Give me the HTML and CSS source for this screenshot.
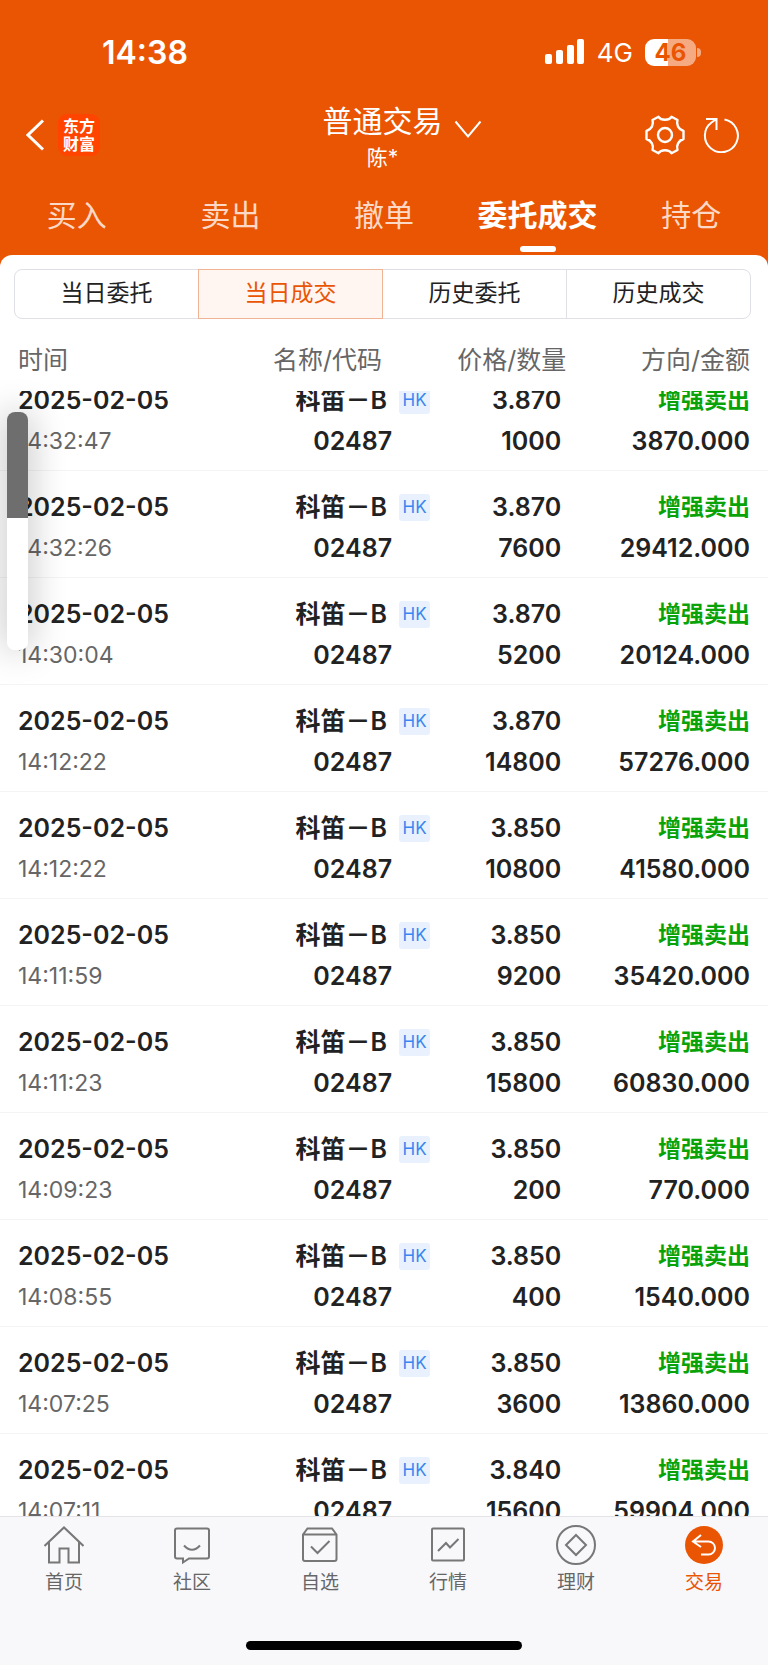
FILE: index.html
```
<!DOCTYPE html>
<html lang="zh-CN">
<head>
  <meta charset="utf-8">
  <meta name="viewport" content="width=device-width">
  <title>普通交易</title>
  <link rel="stylesheet" href="styles.css">
</head>
<body>
  <header class="top">
    <div class="status">
      <span class="clock">14:38</span>
      <div class="status-right">
        <svg width="40" height="26" viewBox="0 0 40 26" fill="#fff">
          <rect x="0" y="15" width="7" height="10" rx="2"/>
          <rect x="11" y="11" width="7" height="14" rx="2"/>
          <rect x="22" y="6" width="7" height="19" rx="2"/>
          <rect x="32" y="0" width="7" height="25" rx="2"/>
        </svg>
        <span class="network">4G</span>
        <div class="battery"><span class="level">46</span><i class="cap"></i></div>
      </div>
    </div>

    <div class="titlebar">
      <div class="side">
        <button class="icon-btn" aria-label="返回">
          <svg width="20" height="32" viewBox="0 0 20 32" fill="none" stroke="#fff" stroke-width="3"><path d="M17 1.500L2 16l15 14.500"/></svg>
        </button>
        <a class="logo" href="#">东方<br>财富</a>
      </div>
      <button class="account">
        <span class="account-title">普通交易</span>
        <svg class="chevron" width="28" height="20" viewBox="0 0 28 20" fill="none" stroke="#fff" stroke-width="2"><path d="M1.500 1.500L14 16.500l12.500-15"/></svg>
        <span class="account-name">陈*</span>
      </button>
      <div class="side end">
        <button class="icon-btn" aria-label="设置">
          <svg width="40" height="40" viewBox="0 0 40 40" fill="none" stroke="#fff" stroke-width="2.400" stroke-linejoin="round">
            <path d="M13.500 1.800C16 5.800 24 5.800 26.500 1.800L32.500 5C31 9.500 33.500 14.500 38.500 16V24C33.500 25.500 31 30.500 32.500 35L26.500 38.200C24 34.200 16 34.200 13.500 38.200L7.500 35C9 30.500 6.500 25.500 1.500 24V16C6.500 14.500 9 9.500 7.500 5Z"/>
            <circle cx="20" cy="20" r="7"/>
          </svg>
        </button>
        <button class="icon-btn" aria-label="刷新">
          <svg width="36" height="36" viewBox="0 0 36 36" fill="none" stroke="#fff" stroke-width="2">
            <path d="M21.500 2.500A16.500 16.500 0 1 1 8.500 5.500L13.500 2M3 2H13.500V13"/>
          </svg>
        </button>
      </div>
    </div>

    <nav class="tabs">
      <a href="#">买入</a>
      <a href="#">卖出</a>
      <a href="#">撤单</a>
      <a href="#" class="active">委托成交</a>
      <a href="#">持仓</a>
    </nav>
  </header>

  <main class="sheet">
    <div class="segment">
      <button>当日委托</button>
      <button class="active">当日成交</button>
      <button>历史委托</button>
      <button>历史成交</button>
    </div>

    <div class="list" id="list">
      <table class="deals">
        <thead>
          <tr><th>时间</th><th>名称/代码</th><th>价格/数量</th><th>方向/金额</th></tr>
        </thead>
        <tbody>
          <tr>
            <td>2025-02-05<p class="time">14:32:47</p></td>
            <td>科笛－B<span class="market">HK</span><p>02487</p></td>
            <td>3.870<p>1000</p></td>
            <td><p class="sell">增强卖出</p>3870.000</td>
          </tr>
          <tr>
            <td>2025-02-05<p class="time">14:32:26</p></td>
            <td>科笛－B<span class="market">HK</span><p>02487</p></td>
            <td>3.870<p>7600</p></td>
            <td><p class="sell">增强卖出</p>29412.000</td>
          </tr>
          <tr>
            <td>2025-02-05<p class="time">14:30:04</p></td>
            <td>科笛－B<span class="market">HK</span><p>02487</p></td>
            <td>3.870<p>5200</p></td>
            <td><p class="sell">增强卖出</p>20124.000</td>
          </tr>
          <tr>
            <td>2025-02-05<p class="time">14:12:22</p></td>
            <td>科笛－B<span class="market">HK</span><p>02487</p></td>
            <td>3.870<p>14800</p></td>
            <td><p class="sell">增强卖出</p>57276.000</td>
          </tr>
          <tr>
            <td>2025-02-05<p class="time">14:12:22</p></td>
            <td>科笛－B<span class="market">HK</span><p>02487</p></td>
            <td>3.850<p>10800</p></td>
            <td><p class="sell">增强卖出</p>41580.000</td>
          </tr>
          <tr>
            <td>2025-02-05<p class="time">14:11:59</p></td>
            <td>科笛－B<span class="market">HK</span><p>02487</p></td>
            <td>3.850<p>9200</p></td>
            <td><p class="sell">增强卖出</p>35420.000</td>
          </tr>
          <tr>
            <td>2025-02-05<p class="time">14:11:23</p></td>
            <td>科笛－B<span class="market">HK</span><p>02487</p></td>
            <td>3.850<p>15800</p></td>
            <td><p class="sell">增强卖出</p>60830.000</td>
          </tr>
          <tr>
            <td>2025-02-05<p class="time">14:09:23</p></td>
            <td>科笛－B<span class="market">HK</span><p>02487</p></td>
            <td>3.850<p>200</p></td>
            <td><p class="sell">增强卖出</p>770.000</td>
          </tr>
          <tr>
            <td>2025-02-05<p class="time">14:08:55</p></td>
            <td>科笛－B<span class="market">HK</span><p>02487</p></td>
            <td>3.850<p>400</p></td>
            <td><p class="sell">增强卖出</p>1540.000</td>
          </tr>
          <tr>
            <td>2025-02-05<p class="time">14:07:25</p></td>
            <td>科笛－B<span class="market">HK</span><p>02487</p></td>
            <td>3.850<p>3600</p></td>
            <td><p class="sell">增强卖出</p>13860.000</td>
          </tr>
          <tr>
            <td>2025-02-05<p class="time">14:07:11</p></td>
            <td>科笛－B<span class="market">HK</span><p>02487</p></td>
            <td>3.840<p>15600</p></td>
            <td><p class="sell">增强卖出</p>59904.000</td>
          </tr>
        </tbody>
      </table>
    </div>
    <div class="volume"></div>
  </main>

  <footer class="bottom">
    <nav class="menu">
      <a href="#">
        <svg viewBox="0 0 40 40"><path d="M.5 21L20 2.500L39.500 21M5 17V37.500H15.500V23.500H24.500V37.500H35V17"/></svg>
        首页
      </a>
      <a href="#">
        <svg viewBox="0 0 40 40"><path d="M5 3.500H35Q37 3.500 37 5.500V31.500Q37 33.500 35 33.500H17L11 37.500V33.500H5Q3 33.500 3 31.500V5.500Q3 3.500 5 3.500ZM12 20.500Q20 29 28 20.500"/></svg>
        社区
      </a>
      <a href="#">
        <svg viewBox="0 0 40 40"><path d="M3 9.500L7.500 3.500H32L36.500 9.500V34Q36.500 36 34.500 36H5Q3 36 3 34ZM3 9.500H36.500M11 21.500L17.500 28L29.500 16"/></svg>
        自选
      </a>
      <a href="#">
        <svg viewBox="0 0 40 40"><rect x="4" y="3.500" width="32" height="32" rx="1"/><path d="M10 26L18 18L22 22.500L30.500 14"/></svg>
        行情
      </a>
      <a href="#">
        <svg viewBox="0 0 40 40"><circle cx="20" cy="20" r="19"/><path d="M20 10L30 20L20 30L10 20Z"/></svg>
        理财
      </a>
      <a href="#" class="active">
        <svg viewBox="0 0 40 40"><circle cx="20" cy="20" r="19"/><path class="arrow" d="M17 10L9 16.500L17 22M9 16.500H24.500A6.500 6.500 0 0 1 24.500 29.500H17"/></svg>
        交易
      </a>
    </nav>
    <div class="home-bar"></div>
  </footer>

  <script>
    // open with the first row partly under the sticky head
    document.querySelector('#list').scrollTop = 27;
  </script>
</body>
</html>
```
FILE: styles.css
```
* {
  box-sizing: border-box;
}

body {
  margin: 0;
  height: 100vh;
  display: flex;
  flex-direction: column;
  background: #ea5504;
  color: #222;
  font-family: Inter, "Noto Sans CJK SC", sans-serif;
  font-size: 25px;
}

p {
  margin: 0;
}

a {
  color: inherit;
  text-decoration: none;
}

button {
  margin: 0;
  padding: 0;
  border: 0;
  background: none;
  color: inherit;
  font: inherit;
}

svg {
  display: block;
}

/* header */

.top {
  color: #fff;
}

.status {
  height: 95px;
  padding: 9px 72px 0 102px;
  display: flex;
  align-items: center;
  justify-content: space-between;
}

.clock {
  font-size: 32px;
  font-weight: 600;
}

.status-right {
  display: flex;
  align-items: center;
  gap: 12px;
}

.network {
  font-size: 26px;
}

.battery {
  position: relative;
  width: 51px;
  height: 27px;
  border-radius: 9px;
  background: linear-gradient(90deg, #fff 46%, #f5aa82 46%);
  color: #ea5504;
  font-size: 24px;
  font-weight: 700;
  line-height: 27px;
  text-align: center;
}

.cap {
  position: absolute;
  left: 52px;
  top: 9px;
  width: 4px;
  height: 9px;
  border-radius: 0 4px 4px 0;
  background: #f5aa82;
}

.titlebar {
  height: 80px;
  padding: 0 29px 0 26px;
  display: grid;
  grid-template-columns: 1fr auto 1fr;
  align-items: center;
}

.side {
  display: flex;
  align-items: center;
  gap: 12px;
}

.end {
  justify-content: flex-end;
  gap: 18px;
}

.logo {
  width: 42px;
  height: 42px;
  border-radius: 9px;
  background: #ff4400;
  font-size: 16px;
  font-weight: 700;
  line-height: 18px;
  padding-top: 3px;
  text-align: center;
}

.account {
  display: grid;
  grid-template-columns: 28px auto 28px;
  column-gap: 11px;
  padding-top: 7px;
}

.account-title {
  grid-column: 2;
  font-size: 30px;
  line-height: 38px;
}

.chevron {
  grid-column: 3;
  align-self: end;
}

.account-name {
  grid-column: 2;
  font-size: 21px;
  line-height: 35px;
}

.tabs {
  height: 80px;
  display: flex;
}

.tabs a {
  flex: 1;
  display: flex;
  flex-direction: column;
  align-items: center;
  padding-top: 18px;
  color: #fcd9c6;
  font-size: 30px;
  line-height: 44px;
}

.tabs .active {
  color: #fff;
  font-weight: 700;
}

.tabs .active::after {
  content: "";
  width: 36px;
  height: 6px;
  margin-top: 9px;
  border-radius: 3px;
  background: #fff;
}

/* sheet */

.sheet {
  position: relative;
  flex: 1;
  min-height: 0;
  display: flex;
  flex-direction: column;
  border-radius: 12px 12px 0 0;
  background: #fff;
}

.segment {
  display: flex;
  height: 50px;
  margin: 14px 17px 0 14px;
  border: 1px solid #dfdfe6;
  border-radius: 8px;
}

.segment button {
  flex: 1;
  font-size: 23px;
  line-height: 46px;
  padding-bottom: 2px;
}

.segment button:last-child {
  border-left: 1px solid #dfdfe6;
}

.segment .active {
  margin: -1px 0;
  border: 1px solid #f0b394;
  background: #fff5f1;
  color: #ea5504;
}

.list {
  flex: 1;
  min-height: 0;
  overflow-y: auto;
  scrollbar-width: none;
}

.deals {
  width: 100%;
  table-layout: fixed;
  border-spacing: 0;
}

.deals th {
  position: sticky;
  top: 0;
  z-index: 1;
  padding: 24px 0 14px;
  background: #fff;
  color: #666;
  font-weight: 400;
  line-height: 34px;
  text-align: right;
}

.deals td {
  padding: 16px 0 8px;
  border-bottom: 1px solid #f4f4f4;
  font-weight: 600;
  line-height: 41px;
  text-align: right;
  vertical-align: top;
  white-space: nowrap;
}

.deals th:nth-child(1),
.deals td:nth-child(1) {
  width: 30%;
  padding-left: 18px;
  text-align: left;
}

.deals th:nth-child(2) {
  width: 26%;
  padding-right: 48px;
}

.deals td:nth-child(2) p {
  padding-right: 38px;
}

.deals th:nth-child(3) {
  width: 18%;
  padding-right: 2px;
}

.deals td:nth-child(3) {
  padding-right: 7px;
}

.deals th:nth-child(4),
.deals td:nth-child(4) {
  width: 26%;
  padding-right: 18px;
}

.deals .time {
  color: #666;
  font-size: 23px;
  font-weight: 400;
}

.market {
  display: inline-block;
  width: 31px;
  height: 27px;
  margin: 7px 0 0 12px;
  border-radius: 3px;
  background: #e8f1fd;
  color: #3a86f0;
  font-size: 17px;
  font-weight: 400;
  line-height: 27px;
  text-align: center;
  vertical-align: top;
}

.sell {
  color: #09a309;
  font-size: 23px;
}

/* volume indicator shown over the list */
.volume {
  position: absolute;
  z-index: 2;
  left: 7px;
  top: 157px;
  width: 21px;
  height: 238px;
  border-radius: 8px;
  background: linear-gradient(#6e6e6e 106px, #fff 106px);
  box-shadow: 0 0 36px rgba(0, 0, 0, 0.3);
}

/* bottom menu */

.bottom {
  height: 149px;
  border-top: 1px solid #e3e3e8;
  background: #f8f8fb;
}

.menu {
  display: flex;
}

.menu a {
  flex: 1;
  display: flex;
  flex-direction: column;
  align-items: center;
  padding-top: 8px;
  color: #666;
  font-size: 19px;
  line-height: 36px;
}

.menu svg {
  width: 40px;
  height: 40px;
  fill: none;
  stroke: #777;
  stroke-width: 2;
}

.menu .active {
  color: #ea5504;
}

.menu .active circle {
  fill: #ea5504;
  stroke: none;
}

.menu .arrow {
  stroke: #fff;
}

.home-bar {
  width: 36%;
  height: 9px;
  margin: 40px auto 0;
  border-radius: 5px;
  background: #000;
}
```
